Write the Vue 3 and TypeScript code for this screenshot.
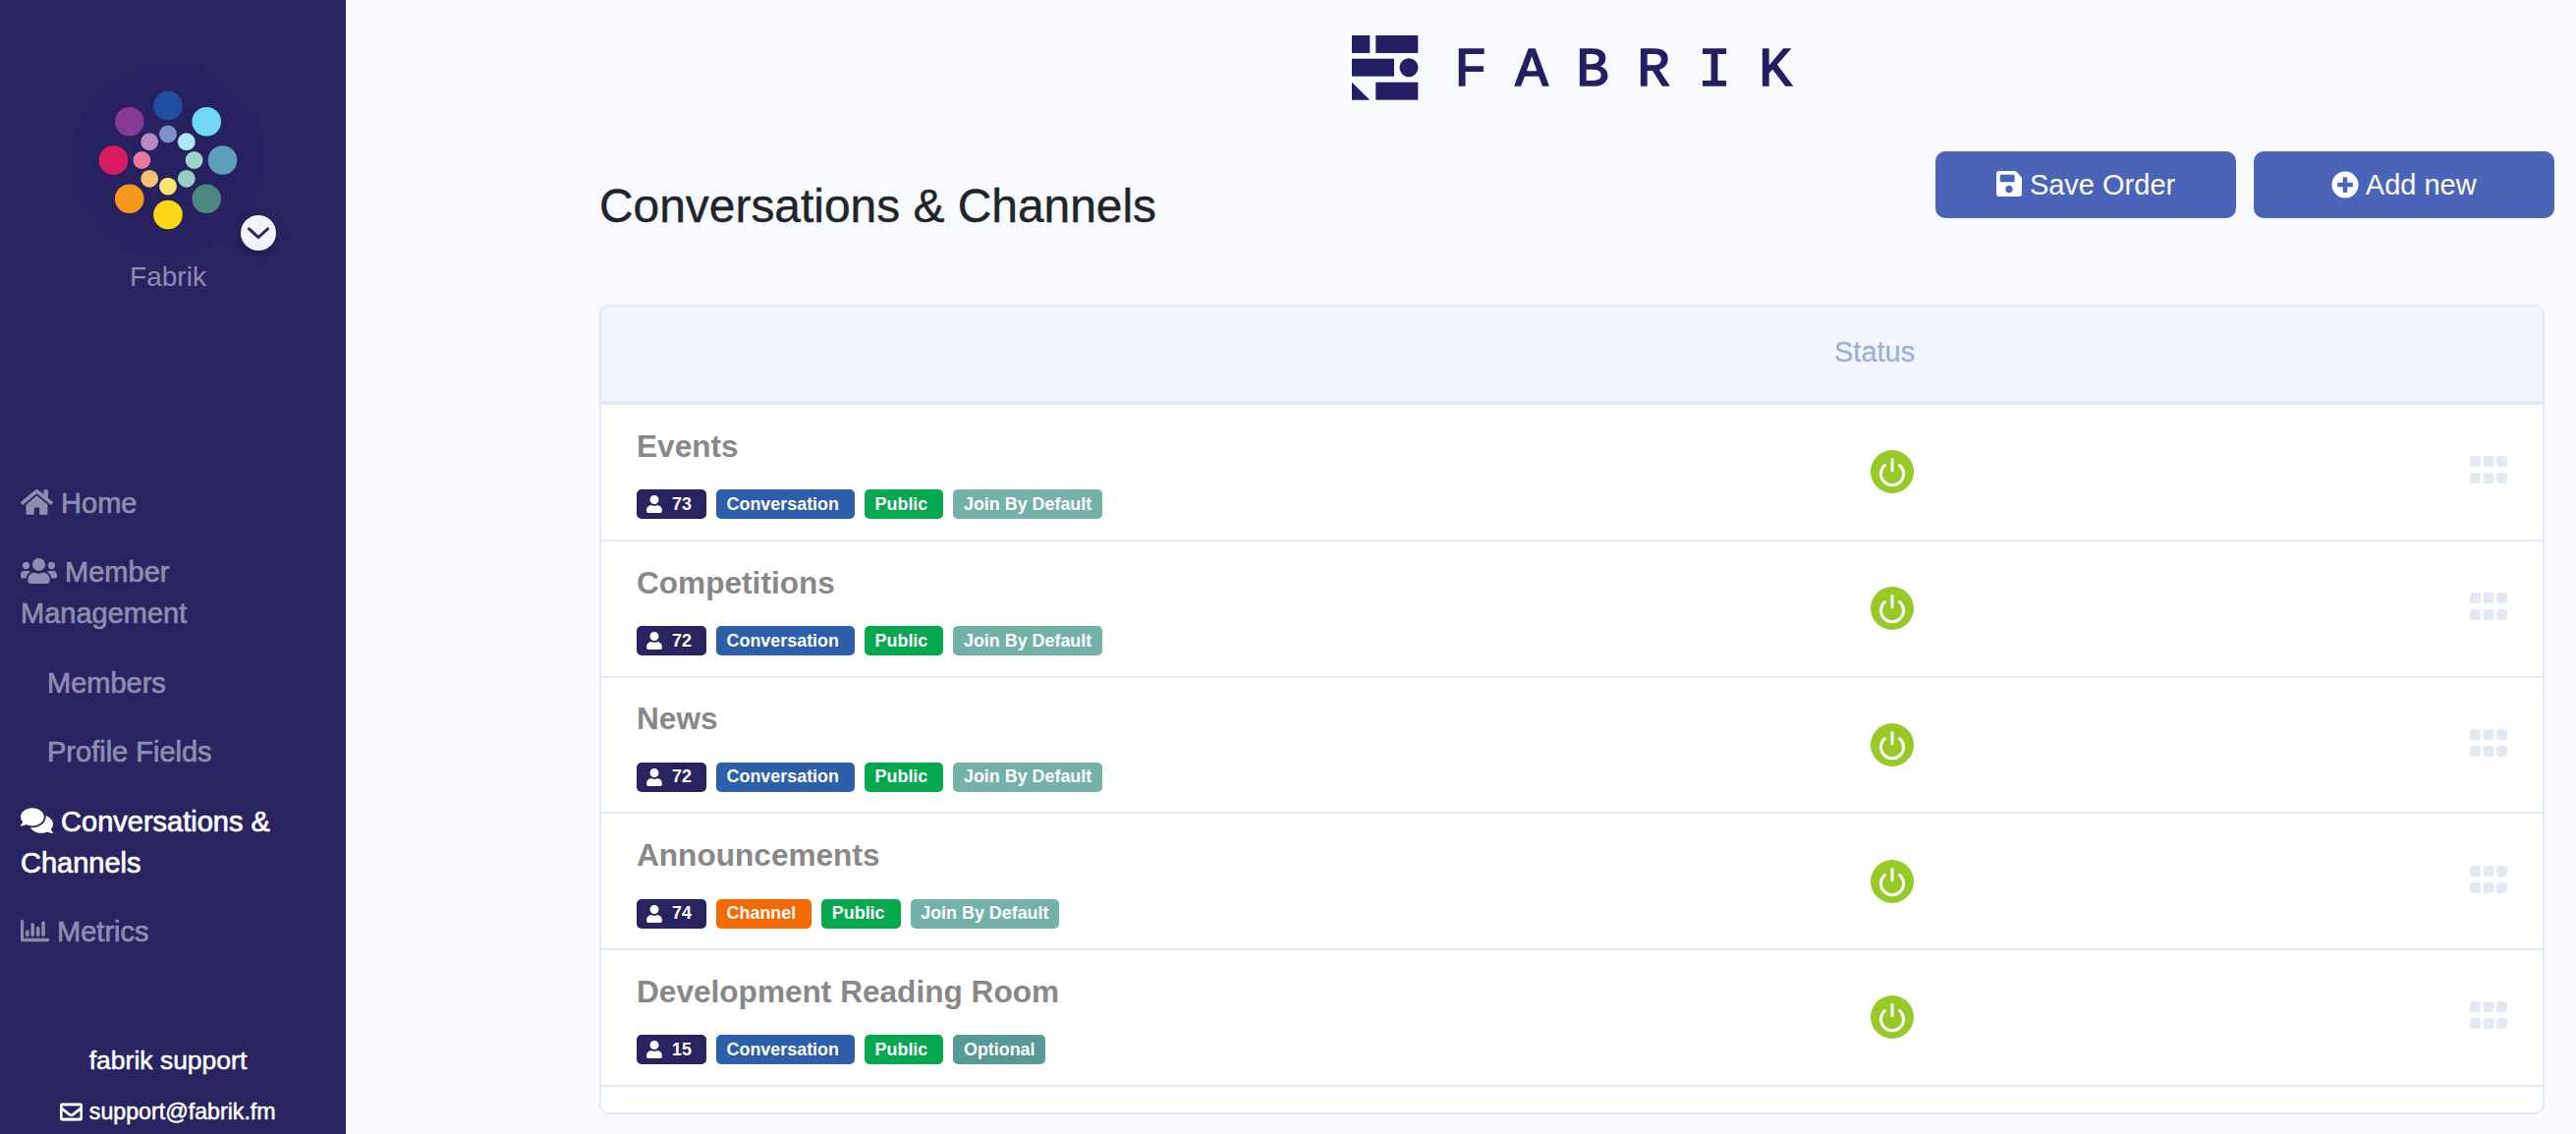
<script setup lang="ts">
type BadgeKind = 'conversation' | 'channel' | 'public' | 'join' | 'optional';

interface Channel {
  name: string;
  members: number;
  type: string;
  typeKind: BadgeKind;
  access: string;
  accessKind: BadgeKind;
}

const channels: Channel[] = [
  { name: 'Events', members: 73, type: 'Conversation', typeKind: 'conversation', access: 'Join By Default', accessKind: 'join' },
  { name: 'Competitions', members: 72, type: 'Conversation', typeKind: 'conversation', access: 'Join By Default', accessKind: 'join' },
  { name: 'News', members: 72, type: 'Conversation', typeKind: 'conversation', access: 'Join By Default', accessKind: 'join' },
  { name: 'Announcements', members: 74, type: 'Channel', typeKind: 'channel', access: 'Join By Default', accessKind: 'join' },
  { name: 'Development Reading Room', members: 15, type: 'Conversation', typeKind: 'conversation', access: 'Optional', accessKind: 'optional' },
];

// clockwise from the top dot
const outerColors = ['#1f4ea1', '#74d7f7', '#5a9eb8', '#4a887f', '#ffd814', '#f7981d', '#d81b60', '#863a96'];
const innerColors = ['#7b93c8', '#aee7fb', '#9dd3cb', '#95cfc7', '#ffe56e', '#fbbf6f', '#e9779e', '#b68ac0'];

function dots(colors: string[], radius: number) {
  return colors.map((color, i) => {
    const angle = (i * Math.PI) / 4;
    return {
      color,
      x: 98 + radius * Math.sin(angle),
      y: 98 - radius * Math.cos(angle),
    };
  });
}

const outerDots = dots(outerColors, 55.5);
const innerDots = dots(innerColors, 26.6);

const gripCells = [0, 1, 2, 3, 4, 5].map((i) => ({ x: (i % 3) * 13.5, y: i < 3 ? 0 : 17 }));
</script>

<template>
  <div class="app-shell">
    <aside class="sidebar">
      <div class="avatar">
        <svg class="avatar__art" viewBox="0 0 196 196" width="196" height="196" aria-label="Fabrik">
          <circle cx="98" cy="98" r="98" fill="#27215f" />
          <circle v-for="d in outerDots" :key="d.color" :cx="d.x" :cy="d.y" r="14.8" :fill="d.color" />
          <circle v-for="d in innerDots" :key="d.color" :cx="d.x" :cy="d.y" r="8.9" :fill="d.color" />
        </svg>
        <span class="avatar__toggle">
          <svg viewBox="0 0 24 16" width="24" height="16">
            <path d="M1.5 3 12 12.5 22.5 3" fill="none" stroke="#29245f" stroke-width="3" />
          </svg>
        </span>
      </div>
      <div class="org-name">Fabrik</div>

      <nav class="nav">
        <a class="nav__item">
          <svg class="nav__icon" viewBox="0 0 576 512" width="33" height="30"><path d="M280.37 148.26L96 300.11V464a16 16 0 0 0 16 16l112.06-.29a16 16 0 0 0 15.92-16V368a16 16 0 0 1 16-16h64a16 16 0 0 1 16 16v95.64a16 16 0 0 0 16 16.05L464 480a16 16 0 0 0 16-16V300L295.67 148.26a12.19 12.19 0 0 0-15.3 0zM571.6 251.47L488 182.56V44.05a12 12 0 0 0-12-12h-56a12 12 0 0 0-12 12v72.61L318.47 43a48 48 0 0 0-61 0L4.34 251.47a12 12 0 0 0-1.6 16.9l25.5 31A12 12 0 0 0 45.15 301l235.22-193.74a12.19 12.19 0 0 1 15.3 0L530.9 301a12 12 0 0 0 16.9-1.6l25.5-31a12 12 0 0 0-1.7-16.93z" /></svg>
          Home
        </a>
        <a class="nav__item">
          <svg class="nav__icon" viewBox="0 0 640 512" width="37" height="30"><path d="M96 224c35.3 0 64-28.7 64-64s-28.7-64-64-64-64 28.7-64 64 28.7 64 64 64zm448 0c35.3 0 64-28.7 64-64s-28.7-64-64-64-64 28.7-64 64 28.7 64 64 64zm32 32h-64c-17.6 0-33.5 7.1-45.1 18.6 40.3 22.1 68.9 62 75.1 109.4h66c17.7 0 32-14.3 32-32v-32c0-35.3-28.7-64-64-64zm-256 0c61.9 0 112-50.1 112-112S381.9 32 320 32 208 82.1 208 144s50.1 112 112 112zm76.8 32h-8.3c-20.8 10-43.9 16-68.5 16s-47.6-6-68.5-16h-8.3C179.6 288 128 339.6 128 403.2V432c0 26.5 21.5 48 48 48h288c26.5 0 48-21.5 48-48v-28.8c0-63.6-51.6-115.2-115.2-115.2zm-223.7-13.4C161.5 263.1 145.6 256 128 256H64c-35.3 0-64 28.7-64 64v32c0 17.7 14.3 32 32 32h65.9c6.3-47.4 34.9-87.3 75.2-109.4z" /></svg>
          Member Management
        </a>
        <a class="nav__item nav__item--sub">Members</a>
        <a class="nav__item nav__item--sub">Profile Fields</a>
        <a class="nav__item nav__item--active">
          <svg class="nav__icon" viewBox="0 0 576 512" width="33" height="30"><path d="M416 192c0-88.4-93.1-160-208-160S0 103.6 0 192c0 34.3 14.1 65.9 38 92-13.4 30.2-35.5 54.2-35.8 54.5-2.2 2.3-2.8 5.7-1.5 8.7S4.8 352 8 352c36.6 0 66.9-12.3 88.7-25 32.2 15.7 70.3 25 111.3 25 114.9 0 208-71.6 208-160zm122 220c23.9-26 38-57.7 38-92 0-66.9-53.5-124.2-129.3-148.1.9 6.6 1.3 13.3 1.3 20.1 0 105.9-107.7 192-240 192-10.8 0-21.3-.8-31.7-1.9C207.8 439.6 281.8 480 368 480c41 0 79.1-9.2 111.3-25 21.8 12.7 52.1 25 88.7 25 3.2 0 6.1-1.9 7.3-4.8 1.3-2.9.7-6.3-1.5-8.7-.3-.3-22.4-24.2-35.8-54.5z" /></svg>
          Conversations &amp; Channels
        </a>
        <a class="nav__item">
          <svg class="nav__icon" viewBox="0 0 512 512" width="29" height="30"><path d="M396.8 352h22.4c6.4 0 12.8-6.4 12.8-12.8V108.8c0-6.4-6.4-12.8-12.8-12.8h-22.4c-6.4 0-12.8 6.4-12.8 12.8v230.4c0 6.4 6.4 12.8 12.8 12.8zm-192 0h22.4c6.4 0 12.8-6.4 12.8-12.8V140.8c0-6.4-6.4-12.8-12.8-12.8h-22.4c-6.4 0-12.8 6.4-12.8 12.8v198.4c0 6.4 6.4 12.8 12.8 12.8zm96 0h22.4c6.4 0 12.8-6.4 12.8-12.8V204.8c0-6.4-6.4-12.8-12.8-12.8h-22.4c-6.4 0-12.8 6.4-12.8 12.8v134.4c0 6.4 6.4 12.8 12.8 12.8zM496 400H48V80c0-8.84-7.16-16-16-16H16C7.16 64 0 71.16 0 80v336c0 17.67 14.33 32 32 32h464c8.84 0 16-7.16 16-16v-16c0-8.84-7.16-16-16-16zm-387.2-48h22.4c6.4 0 12.8-6.4 12.8-12.8v-70.4c0-6.4-6.4-12.8-12.8-12.8h-22.4c-6.4 0-12.8 6.4-12.8 12.8v70.4c0 6.4 6.4 12.8 12.8 12.8z" stroke="currentColor" stroke-width="14" /></svg>
          Metrics
        </a>
      </nav>

      <div class="support">
        <div class="support__title">fabrik support</div>
        <div class="support__mail">
          <svg viewBox="0 0 512 512" width="23" height="23"><path d="M464 64H48C21.49 64 0 85.49 0 112v288c0 26.51 21.49 48 48 48h416c26.51 0 48-21.49 48-48V112c0-26.51-21.49-48-48-48zm0 48v40.805c-22.422 18.259-58.168 46.651-134.587 106.49-16.841 13.247-50.201 45.072-73.413 44.701-23.208.375-56.579-31.459-73.413-44.701C106.18 199.465 70.425 171.067 48 152.805V112h416zM48 400V214.398c22.914 18.251 55.409 43.862 104.938 82.646 21.857 17.205 60.134 55.186 103.062 54.955 42.717.231 80.509-37.199 103.053-54.947 49.528-38.783 82.032-64.401 104.947-82.653V400H48z" stroke="#fff" stroke-width="18" /></svg>
          support@fabrik.fm
        </div>
      </div>
    </aside>

    <main class="main">
      <div class="brand">
        <svg viewBox="0 0 68 66" width="68" height="66">
          <rect x="0" y="0" width="18.3" height="18" />
          <rect x="24.3" y="0" width="43" height="18" />
          <rect x="0" y="23.7" width="43" height="18" />
          <circle cx="58" cy="32.7" r="9.5" />
          <path d="M0 47.7 18.3 65.7H0z" />
          <rect x="24.3" y="47.7" width="43" height="18" />
        </svg>
        <span class="brand__name">FABRIK</span>
      </div>

      <div class="page-head">
        <h1 class="page-head__title">Conversations &amp; Channels</h1>
        <div class="page-head__actions">
          <button class="btn" type="button">
            <svg viewBox="0 0 448 512" width="26" height="30"><path d="M433.941 129.941l-83.882-83.882A48 48 0 0 0 316.118 32H48C21.49 32 0 53.49 0 80v352c0 26.51 21.49 48 48 48h352c26.51 0 48-21.49 48-48V163.882a48 48 0 0 0-14.059-33.941zM224 416c-35.346 0-64-28.654-64-64 0-35.346 28.654-64 64-64s64 28.654 64 64c0 35.346-28.654 64-64 64zm96-304.52V212c0 6.627-5.373 12-12 12H76c-6.627 0-12-5.373-12-12V108c0-6.627 5.373-12 12-12h228.52c3.183 0 6.235 1.264 8.485 3.515l3.48 3.48A11.996 11.996 0 0 1 320 111.48z" /></svg>
            Save Order
          </button>
          <button class="btn" type="button">
            <svg viewBox="0 0 512 512" width="28" height="28"><path d="M256 8C119 8 8 119 8 256s111 248 248 248 248-111 248-248S393 8 256 8zm144 276c0 6.6-5.4 12-12 12h-92v92c0 6.6-5.4 12-12 12h-56c-6.6 0-12-5.4-12-12v-92h-92c-6.6 0-12-5.4-12-12v-56c0-6.6 5.4-12 12-12h92v-92c0-6.6 5.4-12 12-12h56c6.6 0 12 5.4 12 12v92h92c6.6 0 12 5.4 12 12v56z" /></svg>
            Add new
          </button>
        </div>
      </div>

      <section class="card">
        <div class="card__head">Status</div>
        <div v-for="channel in channels" :key="channel.name" class="row">
          <div class="row__info">
            <div class="row__name">{{ channel.name }}</div>
            <div class="row__badges">
              <span class="badge badge--members">
                <svg viewBox="0 0 448 512" width="16" height="18"><path d="M224 256c70.7 0 128-57.3 128-128S294.7 0 224 0 96 57.3 96 128s57.3 128 128 128zm89.6 32h-16.7c-22.2 10.2-46.9 16-72.9 16s-50.6-5.8-72.9-16h-16.7C60.2 288 0 348.2 0 422.4V464c0 26.5 21.5 48 48 48h352c26.5 0 48-21.5 48-48v-41.6c0-74.2-60.2-134.4-134.4-134.4z" /></svg>
                {{ channel.members }}
              </span>
              <span :class="['badge', `badge--${channel.typeKind}`]">{{ channel.type }}</span>
              <span class="badge badge--public">Public</span>
              <span :class="['badge', `badge--${channel.accessKind}`]">{{ channel.access }}</span>
            </div>
          </div>
          <svg class="row__power" viewBox="0 0 44 44" width="44" height="44">
            <circle cx="22" cy="22" r="22" fill="#97c928" />
            <path d="M14.5 15.5a11.5 11.5 0 1 0 15 0" fill="none" stroke="#fff" stroke-width="3" stroke-linecap="round" />
            <path d="M22 9.5v11" fill="none" stroke="#fff" stroke-width="3" stroke-linecap="round" />
          </svg>
          <svg class="row__grip" viewBox="0 0 38 28" width="38" height="28">
            <rect v-for="(cell, i) in gripCells" :key="i" :x="cell.x" :y="cell.y" width="11" height="11" rx="3" fill="#e3e9f2" />
          </svg>
        </div>
        <div class="card__foot"></div>
      </section>
    </main>
  </div>
</template>

<style scoped>
.app-shell {
  display: flex;
  height: 1154px;
  overflow: hidden;
  background: #f8f9fd;
  font-family: "Liberation Sans", Arial, sans-serif;
}

.sidebar {
  flex: 0 0 352px;
  box-sizing: border-box;
  padding: 65px 10px 0 0;
  background: #29245f;
  color: #8f8cb0;
}

.avatar {
  position: relative;
  width: 196px;
  height: 196px;
  margin: 0 auto;
}

.avatar__art {
  display: block;
}

.avatar__toggle {
  position: absolute;
  left: 172px;
  top: 154px;
  width: 36px;
  height: 36px;
  border-radius: 50%;
  background: #f1f4fd;
  box-shadow: 0 3px 8px rgb(0 0 0 / 35%);
  display: flex;
  align-items: center;
  justify-content: center;
}

.org-name {
  text-align: center;
  font-size: 28px;
  line-height: 42px;
}

.nav {
  display: flex;
  flex-direction: column;
  gap: 28.4px;
  margin-top: 188px;
  padding-left: 21px;
}

.nav__item {
  display: block;
  font-size: 29px;
  font-weight: 400;
  line-height: 42px;
  padding-right: 20px;
  -webkit-text-stroke: 0.7px currentColor;
}

.nav__item--sub {
  padding-left: 27px;
}

.nav__item--active {
  color: #fff;
}

.nav__icon {
  fill: currentColor;
  vertical-align: -4px;
}

.support {
  margin-top: 92px;
  color: #fff;
  text-align: center;
  -webkit-text-stroke: 0.5px currentColor;
}

.support__title {
  font-size: 26.5px;
  line-height: 36px;
}

.support__mail {
  margin-top: 19px;
  font-size: 23.2px;
  line-height: 30px;
}

.support__mail svg {
  fill: currentColor;
  vertical-align: -4px;
}

.main {
  flex: 1;
  min-width: 0;
  box-sizing: border-box;
  padding: 36px 32px 0 258px;
}

.brand {
  display: flex;
  align-items: center;
  justify-content: center;
  gap: 36px;
  height: 66px;
  fill: #231f63;
}

.brand__name {
  font-family: "Liberation Mono", monospace;
  font-size: 56px;
  font-weight: 400;
  line-height: 66px;
  letter-spacing: 28.4px;
  margin: 6px -28.4px 0 0;
  color: #231f63;
  -webkit-text-stroke: 1.6px #231f63;
}

.page-head {
  display: flex;
  justify-content: space-between;
  align-items: flex-start;
  margin: 52px -10px 72px 0;
}

.page-head__title {
  margin: 28px 0 0;
  font-size: 47.9px;
  font-weight: 400;
  line-height: 56px;
  color: #212529;
  -webkit-text-stroke: 0.4px currentColor;
}

.page-head__actions {
  display: flex;
  gap: 18px;
}

.btn {
  width: 306px;
  height: 68px;
  border: 0;
  border-radius: 10px;
  background: #4a65b7;
  color: #fff;
  fill: #fff;
  font: 400 29px "Liberation Sans", Arial, sans-serif;
}

.btn svg {
  vertical-align: -4px;
}

.card {
  border: 2px solid #e0eaf5;
  border-radius: 10px;
  background: #fdfdfe;
  overflow: hidden;
}

.card__head {
  height: 100px;
  box-sizing: border-box;
  padding-left: 1255px;
  background: #f1f6fe;
  border-bottom: 4px solid #e0eaf5;
  font-size: 29px;
  line-height: 92px;
  color: #9db0d4;
  -webkit-text-stroke: 0.3px currentColor;
}

.row {
  display: grid;
  grid-template-columns: 1292px 44px 1fr;
  align-items: center;
  height: 138.75px;
  box-sizing: border-box;
  background: #fff;
  border-bottom: 2px solid #e0eaf5;
}

.row__info {
  padding: 3.5px 0 0 36px;
}

.row__name {
  font-size: 31.6px;
  font-weight: 700;
  line-height: 36px;
  color: #888;
}

.row__badges {
  display: flex;
  gap: 10px;
  margin-top: 26.5px;
}

.badge {
  display: flex;
  align-items: center;
  gap: 10px;
  height: 30px;
  padding: 0 10.7px;
  border-radius: 5px;
  color: #fff;
  fill: #fff;
  font-size: 17.9px;
  font-weight: 700;
}

.badge--members {
  background: #29235f;
  padding: 0 15px 0 10px;
}

.badge--conversation {
  background: #2c5ea9;
  padding-right: 16px;
}

.badge--channel {
  background: #f56a00;
  padding-right: 16px;
}

.badge--public {
  background: #05a84f;
  padding-right: 16px;
}

.badge--join {
  background: #73b1a9;
}

.badge--optional {
  background: #569a95;
}

.row__grip {
  justify-self: end;
  margin: 0 36px 4px 0;
}

.card__foot {
  height: 26px;
}
</style>

<style>
body {
  background: #f8f9fd;
}
</style>
